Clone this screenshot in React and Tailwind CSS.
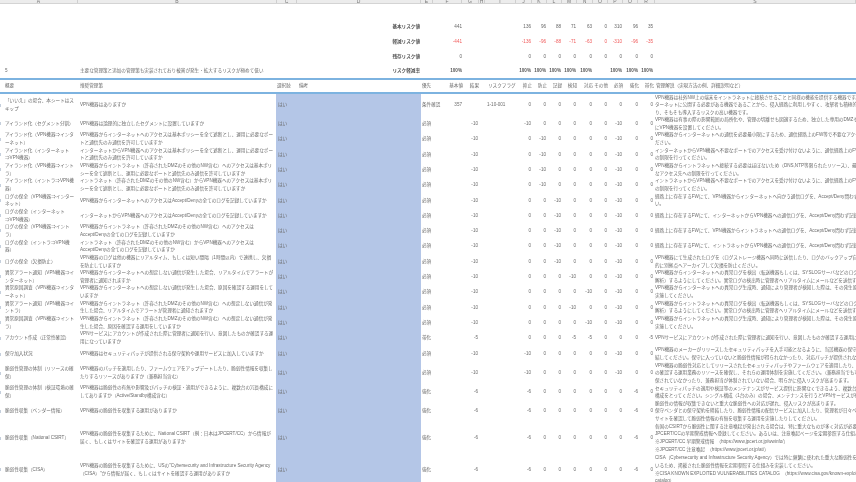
import React from "react";

const numCols = ["w-[15px]", "w-[15px]", "w-[15px]", "w-[15px]", "w-[16px]", "w-[15px]", "w-[15px]", "w-[16px]", "w-[15px]"];
const bandCols = [
  [78, "A"], [199, "B"], [20, "C"], [124, "D"], [12, "E"], [29, "F"], [17, "G"], [6, "H"], [31, "I"],
  [16, "J"], [15, "K"], [15, "L"], [15, "M"], [16, "N"], [15, "O"], [15, "P"], [15, "Q"], [17, "R"], [201, "S"],
];

const summary = [
  { label: "基本リスク値", total: "441", vals: ["136", "96", "88", "71", "63", "0", "310", "96", "35"], cls: "text-[#666]" },
  { label: "軽減リスク値", total: "-441", vals: ["-136", "-96", "-88", "-71", "-63", "0", "-310", "-96", "-35"], cls: "text-[#f05a5a]" },
  { label: "残存リスク値", total: "0", vals: ["0", "0", "0", "0", "0", "0", "0", "0", "0"], cls: "text-[#666]" },
];

const rows = [
  { h: "h-[23px]", a: "「いいえ」の場合、本シートはスキップ", b: "VPN機器はありますか", lv: "条件確認", base: "357", flag: "1-10-001", v: [0, 0, 0, 0, 0, 0, 0, 0, 0], d: ["VPN機器は社外NW上の端末をイントラネットに接続させることと同様の機能を提供する機器です。イン", "ターネットに公開する必要がある機器であることから、侵入経路に利用しやすく、攻撃者も積極的に狙ってお", "り、そもそも導入するリスクの高い機器です。"] },
  { h: "h-[15px]", a: "アイランド化（セグメント分割）", b: "VPN機器は論理的に独立したセグメントに設置していますか", lv: "必須", res: "-10", v: [-10, 0, 0, 0, 0, 0, -10, 0, 0], d: ["VPN機器は有事の際の影響範囲の局所化や、管理の切離せも図適するため、独立した専用のDMZセグメント", "にVPN機器を設置してください。"] },
  { a: "アイランド化（VPN機器⇒インターネット）", b: "VPN機器からインターネットへのアクセスは基本ポリシーを全て遮断とし、運用に必要なポートと通信先のみ通信を許可していますか", lv: "必須", res: "-10", v: [0, -10, 0, 0, 0, 0, -10, 0, 0], d: ["VPN機器からインターネットへの通信を必要最小限にするため、通信経路上のFW等で不要なアクセスを遮断してく", "ださい。"] },
  { a: "アイランド化（インターネット⇒VPN機器）", b: "インターネットからVPN機器へのアクセスは基本ポリシーを全て遮断とし、運用に必要なポートと通信先のみ通信を許可していますか", lv: "必須", res: "-10", v: [0, -10, 0, 0, 0, 0, -10, 0, 0], d: ["インターネットからVPN機器へ不要なポートでのアクセスを受け付けないように、通信経路上のFW等で不要", "の制限を行ってください。"] },
  { a: "アイランド化（VPN機器⇒イントラ）", b: "VPN機器からイントラネット（許容されたDMZのその他のNW含む）へのアクセスは基本ポリシーを全て遮断とし、運用に必要なポートと通信先のみ通信を許可していますか", lv: "必須", res: "-10", v: [0, -10, 0, 0, 0, 0, -10, 0, 0], d: ["VPN機器からイントラネットへ接続する必要はほぼないため（DNS,NTP等限られたリソース）、最小限", "なアクセス先への制限を行ってください。"] },
  { a: "アイランド化（イントラ⇒VPN機器）", b: "イントラネット（許容されたDMZのその他のNW含む）からVPN機器へのアクセスは基本ポリシーを全て遮断とし、運用に必要なポートと通信先のみ通信を許可していますか", lv: "必須", res: "-10", v: [0, -10, 0, 0, 0, 0, -10, 0, 0], d: ["イントラネットからVPN機器へ不要なポートでのアクセスを受け付けないように、通信経路上のFW等で不要", "の制限を行ってください。"] },
  { a: "ログの保全（VPN機器⇒インターネット）", b: "VPN機器からインターネットへのアクセスはAccept/Denyの全てのログを記録していますか", lv: "必須", res: "-10", v: [0, 0, -10, 0, 0, 0, -10, 0, 0], d: ["経路上に存在するFWにて、VPN機器からインターネットへ向かう通信ログを、Accept/Deny問わず記録してくださ", "い。"] },
  { a: "ログの保全（インターネット⇒VPN機器）", b: "インターネットからVPN機器へのアクセスはAccept/Denyの全てのログを記録していますか", lv: "必須", res: "-10", v: [0, 0, -10, 0, 0, 0, -10, 0, 0], d: ["経路上に存在するFWにて、インターネットからVPN機器への通信ログを、Accept/Deny問わず記録してください。"] },
  { a: "ログの保全（VPN機器⇒イントラ）", b: "VPN機器からイントラネット（許容されたDMZのその他のNW含む）へのアクセスはAccept/Denyの全てのログを記録していますか", lv: "必須", res: "-10", v: [0, 0, -10, 0, 0, 0, -10, 0, 0], d: ["経路上に存在するFWにて、VPN機器からイントラネットへの通信ログを、Accept/Deny問わず記録してください。"] },
  { a: "ログの保全（イントラ⇒VPN機器）", b: "イントラネット（許容されたDMZのその他のNW含む）からVPN機器へのアクセスはAccept/Denyの全てのログを記録していますか", lv: "必須", res: "-10", v: [0, 0, -10, 0, 0, 0, -10, 0, 0], d: ["経路上に存在するFWにて、イントラネットからVPN機器への通信ログを、Accept/Deny問わず記録してください。"] },
  { a: "ログの保全（欠損防止）", b: "VPN機器のログは他の機器にリアルタイム、もしくは短い間隔（1時間以内）で連携し、欠損を防止していますか", lv: "必須", res: "-10", v: [0, 0, -10, 0, 0, 0, -10, 0, 0], d: ["VPN機器にて生成されたログを（ログストレージ機器へ同時に送信したり、ログのバックアップ自動化など）定期", "的に別拠点へアーカイブして欠損を防止ください。"] },
  { a: "異常アラート通知（VPN機器⇒インターネット）", b: "VPN機器からインターネットへの想定しない通信が発生した場合、リアルタイムでアラートが管理者に通知されますか", lv: "必須", res: "-10", v: [0, 0, 0, -10, 0, 0, -10, 0, 0], d: ["VPN機器からインターネットへの異常ログを検出（転送機器もしくは、SYSLOGサーバなどのログ分析サーバで", "解析）するようにしてください。異常ログの検出時に管理者へリアルタイムにメールなどを送信する設定を"] },
  { a: "異常原因調査（VPN機器⇒インターネット）", b: "VPN機器からインターネットへの想定しない通信が発生した場合、原因を確認する運用をしていますか", lv: "必須", res: "-10", v: [0, 0, 0, 0, -10, 0, -10, 0, 0], d: ["VPN機器からインターネットへの異常ログ生成時、通知により管理者が検知した際は、その発生原因を調査する運用を", "実施してください。"] },
  { a: "異常アラート通知（VPN機器⇒イントラ）", b: "VPN機器からイントラネット（許容されたDMZのその他のNW含む）への想定しない通信が発生した場合、リアルタイムでアラートが管理者に通知されますか", lv: "必須", res: "-10", v: [0, 0, 0, -10, 0, 0, -10, 0, 0], d: ["VPN機器からイントラネットへの異常ログを検出（転送機器もしくは、SYSLOGサーバなどのログ分析サーバで", "解析）するようにしてください。異常ログの検出時に管理者へリアルタイムにメールなどを送信する設定を"] },
  { a: "異常原因調査（VPN機器⇒イントラ）", b: "VPN機器からイントラネット（許容されたDMZのその他のNW含む）への想定しない通信が発生した場合、原因を確認する運用をしていますか", lv: "必須", res: "-10", v: [0, 0, 0, 0, -10, 0, -10, 0, 0], d: ["VPN機器からイントラネットへの異常ログ生成時、通知により管理者が検知した際は、その発生原因を調査する運用を", "実施してください。"] },
  { a: "アカウント作成（正常性確認）", b: "VPNサービスにアカウントが作成された際に管理者に通知を行い、意図したものか確認する運用になっていますか", lv: "帯化", res: "-5", v: [0, 0, 0, -5, -5, 0, 0, 0, -5], d: ["VPNサービスにアカウントが作成された際に管理者に通知を行い、意図したものか確認する運用にしてください。"] },
  { h: "h-[17px]", a: "保守加入状況", b: "VPN機器はセキュリティパッチが提供される保守契約や運用サービスに加入していますか", lv: "必須", res: "-10", v: [-10, 0, 0, 0, 0, 0, -10, 0, 0], d: ["VPN機器のメーカーがリリースしたセキュリティパッチを入手可能となるように、当該機器の保守契約を締", "結してください。保守に入っていないと脆弱性情報が得られなかったり、対応パッチが提供されないことが"] },
  { h: "h-[21px]", a: "脆弱性管理の体制（リソースの確保）", b: "VPN機器のパッチを適用したり、ファームウェアをアップデートしたり、脆弱性情報を収集したりするリソースがありますか（兼務担当含む）", lv: "必須", res: "-10", v: [-10, 0, 0, 0, 0, 0, -10, 0, 0], d: ["VPN機器の脆弱性対応としてリリースされたセキュリティパッチやファームウェアを適用したり、定期的な情報", "の確認する運用業務のリソースを確保し、それらの運用体制を実施してください。（兼務担当でも可）確", "保されていなかったり、兼務担当が体制されていない場合、明らかに侵入リスクが高まります。"] },
  { h: "h-[17px]", pad: true, a: "脆弱性管理の体制（検証環境の確保）", b: "VPN機器は脆弱性の有無や影響及びパッチの検証・適用ができるように、複数台の冗長構成にしてありますか（Active/Standby構成含む）", lv: "強化", res: "-6", v: [-6, 0, 0, 0, 0, 0, 0, -6, 0], d: ["セキュリティパッチの適用や検証等のメンテナンスがサービス提供に影響なくできるよう、複数台の冗長", "構成をとってください。シングル構成（1台のみ）の場合、メンテナンスを行うとVPNサービスが停止し、", "脆弱性の情報が収集できないと重大な脆弱性への対応が遅れ、侵入リスクが高まります。"] },
  { h: "h-[21px]", pad: true, a: "脆弱性収集（ベンダー情報）", b: "VPN機器の脆弱性を収集する運用がありますか", lv: "強化", res: "-6", v: [-6, 0, 0, 0, 0, 0, 0, -6, 0], d: ["保守ベンダとの保守契約を締結したり、脆弱性情報の配信サービスに加入したり、管理者が日々ベンダの", "サイトを確認して脆弱性情報の有無を収集する運用を実施したりしてください。"] },
  { h: "h-[33px]", a: "脆弱性収集（National CSIRT）", b: "VPN機器の脆弱性を収集するために、National CSIRT（例：日本はJPCERT/CC）から情報が届く、もしくはサイトを確認する運用がありますか", lv: "強化", res: "-6", v: [-6, 0, 0, 0, 0, 0, 0, -6, 0], d: ["各国のCSIRTから脆弱性に関する注意喚起が発出される場合は、特に重大なものが多く対応が必要です。", "JPCERT/CCの早期警戒情報へ登録してください。あるいは、注意喚起ページを定期参照する仕組みを", "※JPCERT/CC 早期警戒情報　（https://www.jpcert.or.jp/wwinfo/）", "※JPCERT/CC 注意喚起　（https://www.jpcert.or.jp/at/）"] },
  { h: "h-[30px]", a: "脆弱性収集（CISA）", b: "VPN機器の脆弱性を収集するために、USの\"Cybersecurity and Infrastructure Security Agency（CISA）\"から情報が届く、もしくはサイトを確認する運用がありますか", lv: "強化", res: "-6", v: [-6, 0, 0, 0, 0, 0, 0, -6, 0], d: ["CISA（Cybersecurity and Infrastructure Security Agency）では特に頻繁に使われた重大な脆弱性を公開して", "いるため、掲載された脆弱性情報を定期参照する仕組みを実装してください。", "※CISA KNOWN EXPLOITED VULNERABILITIES CATALOG　（https://www.cisa.gov/known-exploited-vulnerabilities-", "catalog）"] },
];

function Nums({ vals, cls = "" }) {
  return (
    <div className={`flex ${cls}`}>
      {vals.map((v, i) => (
        <div key={i} className={`${numCols[i]} text-right`}>{v}</div>
      ))}
    </div>
  );
}

function SummaryRow({ label, total, vals, cls }) {
  return (
    <div className="flex h-[15px] items-center">
      <div className="w-[421px] pr-[1px] text-right font-bold text-[#555]">{label}</div>
      <div className={`w-[41px] text-right ${cls}`}>{total}</div>
      <div className="w-[54px]" />
      <Nums vals={vals} cls={cls} />
    </div>
  );
}

function DataRow({ row }) {
  return (
    <div className={`flex items-center ${row.h || "h-[15.3px]"}`}>
      <div className="flex w-[78px] shrink-0 items-center pr-[3px]">
        <span className="mr-[4px] h-[3px] w-[1px] shrink-0 bg-[#c5cfdc]" />
        <span>{row.a}</span>
      </div>
      <div className="w-[198px] shrink-0 pl-[2px] pr-[2px]">{row.b}</div>
      <div className="flex h-full w-[145px] shrink-0 items-center bg-[#b4c6e7] pl-[2px]">はい</div>
      <div className="w-[24px] shrink-0 pl-[1px]">{row.lv}</div>
      <div className="w-[17px] shrink-0 text-right">{row.base}</div>
      <div className="w-[16px] shrink-0 text-right">{row.res}</div>
      <div className="w-[38px] shrink-0 pl-[9px]">{row.flag}</div>
      <Nums vals={row.v} cls="shrink-0" />
      <div className={`w-[203px] shrink-0 whitespace-nowrap pl-[2px] ${row.pad ? "pt-[8px]" : ""}`}>
        {row.d.map((line, i) => (
          <div key={i}>{line}</div>
        ))}
      </div>
    </div>
  );
}

export default function App() {
  return (
    <div className="h-[482px] w-[856px] overflow-hidden bg-white font-['Liberation_Sans','Noto_Sans_CJK_JP',sans-serif] text-[4.6px] leading-[7.67px] text-[#6b6b6b] blur-[0.35px]">
      {/* column header strip, cut off at the top of the shot */}
      <div className="flex h-[4px] border-b border-[#d4d4d4] bg-[#ececec]">
        {bandCols.map(([w, letter]) => (
          <div key={letter} style={{ width: w }} className="h-full shrink-0 overflow-hidden border-r border-[#cfcfcf] text-center text-[5px] leading-[2px] text-[#777]">
            {letter}
          </div>
        ))}
      </div>

      <div className="h-[15px]" />
      {summary.map((s) => (
        <SummaryRow key={s.label} {...s} />
      ))}

      <div className="flex h-[14px] items-center">
        <div className="w-[78px] pl-[5px]">5</div>
        <div className="w-[290px] whitespace-nowrap pl-[2px]">主要な管理策と追加の管理策も実装されており被害が発生・拡大するリスクが極めて低い</div>
        <div className="w-[53px] pr-[1px] text-right font-bold text-[#555]">リスク軽減率</div>
        <div className="w-[41px] text-right font-bold text-[#555]">100%</div>
        <div className="w-[54px]" />
        <Nums vals={["100%", "100%", "100%", "100%", "100%", "", "100%", "100%", "100%"]} cls="font-bold text-[#555]" />
      </div>

      <div className="flex h-[15.5px] items-center border-y-2 border-[#7db3e0]">
        <div className="w-[78px] pl-[5px]">概要</div>
        <div className="w-[199px] pl-[2px]">推奨管理策</div>
        <div className="w-[21px]">選択肢</div>
        <div className="w-[123px] pl-[1px]">備考</div>
        <div className="w-[15px] pl-[1px]">優先</div>
        <div className="w-[27px] text-right">基本値</div>
        <div className="w-[16px] text-right">結果</div>
        <div className="w-[38px] pl-[9px]">リスクフラグ</div>
        <div className="flex">
          {["抑止", "防止", "記録", "検知", "対応", "その他", "必須", "強化", "帯化"].map((t, i) => (
            <div key={t} className={`${numCols[i]} whitespace-nowrap text-right`}>{t}</div>
          ))}
        </div>
        <div className="whitespace-nowrap pl-[2px]">管理解説（実現方法の例、詳細説明など）</div>
      </div>

      {rows.map((r) => (
        <DataRow key={r.a} row={r} />
      ))}
    </div>
  );
}
